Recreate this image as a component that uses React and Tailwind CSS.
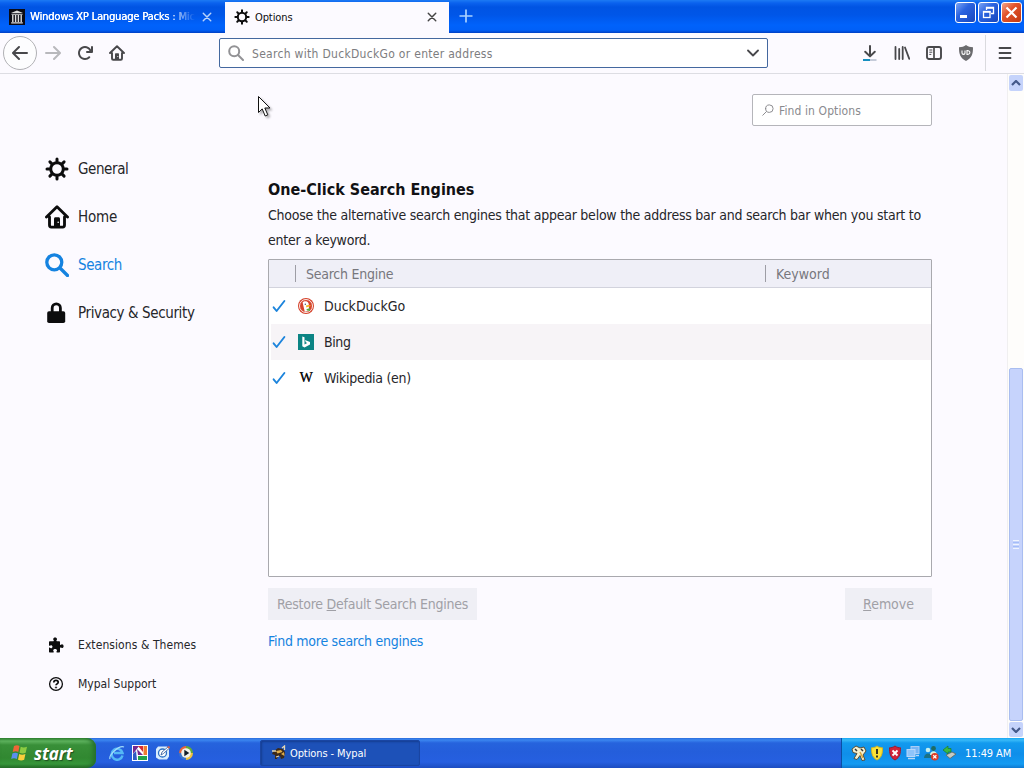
import React from 'react';

const Gear = ({ className }) => (
  <svg viewBox="0 0 24 24" className={className} fill="none" stroke="currentColor">
    <circle cx="12" cy="12" r="6.3" strokeWidth="3" />
    <path
      strokeWidth="3"
      strokeLinecap="round"
      d="M12 2v3M12 19v3M2 12h3M19 12h3M4.9 4.9l2 2M17.1 17.1l2 2M4.9 19.1l2-2M17.1 6.9l2-2"
    />
  </svg>
);

const House = ({ className }) => (
  <svg viewBox="0 0 16 16" className={className}>
    <path
      d="M1 8l7-6.8L15 8M3 8v5.4c0 .8.4 1.3 1.2 1.3h7.6c.8 0 1.2-.5 1.2-1.3V8"
      fill="none"
      stroke="currentColor"
      strokeWidth="1.9"
      strokeLinecap="round"
      strokeLinejoin="round"
    />
    <path d="M6 15V9.2c0-.6.4-1 1-1h2c.6 0 1 .4 1 1V15z" fill="currentColor" />
    <circle cx="8.8" cy="11.5" r=".55" fill="#fff" />
  </svg>
);

const Magnifier = ({ className, width = 2 }) => (
  <svg viewBox="0 0 16 16" className={className} fill="none" stroke="currentColor" strokeWidth={width} strokeLinecap="round">
    <circle cx="6.2" cy="6.2" r="5" />
    <path d="M10 10l5 5" />
  </svg>
);

const Lock = () => (
  <svg viewBox="0 0 24 24" className="h-6 w-6">
    <path d="M7.2 12V7a4.1 4.1 0 0 1 8.2 0V12" fill="none" stroke="currentColor" strokeWidth="2.8" />
    <rect x="2.200" y="10.2" width="18" height="11.800" rx="1.8" fill="currentColor" />
  </svg>
);

const Puzzle = () => (
  <svg viewBox="0 0 16 16" className="h-4 w-4" fill="currentColor">
    <path d="M1 5.2c0-.6.4-1 1-1h3.400c.5 0 .5-.5.300-.9C5.400 2.800 5.200 2.500 5.200 2.200c0-1 .8-1.700 1.900-1.700S9 1.200 9 2.200c0 .4-.2.700-.5 1.100-.2.400-.1.900.4.900H11c.6 0 1 .4 1 1v2.300c0 .5.5.6.900.3.300-.3.700-.5 1.100-.5.900 0 1.600.9 1.600 1.900s-.7 1.900-1.600 1.900c-.4 0-.8-.2-1.100-.5-.4-.3-.9-.1-.9.400V14.500c0 .6-.4 1-1 1H8.900c-.5 0-.6-.5-.4-.9.300-.4.500-.7.500-1.100 0-.8-.8-1.400-1.900-1.400s-1.900.6-1.900 1.400c0 .4.200.7.500 1.100.2.400.2.900-.3.900H2c-.6 0-1-.4-1-1v-3.400c0-.5.500-.6.900-.4.400.300.6.500 1.100.500.800 0 1.500-.6 1.500-1.500S3.800 8.200 3 8.200c-.5 0-.7.200-1.100.500-.4.200-.9.100-.9-.4z" />
  </svg>
);

const Help = () => (
  <svg viewBox="0 0 16 16" className="h-4 w-4" fill="none" stroke="currentColor">
    <circle cx="8" cy="8" r="6.4" strokeWidth="1.3" />
    <path d="M5.800 6.500c0-1.300.9-2.100 2.200-2.100s2.200.8 2.200 1.900c0 1.500-2.200 1.600-2.200 3" strokeWidth="1.700" />
    <circle cx="8" cy="11.500" r=".7" fill="currentColor" strokeWidth=".6" />
  </svg>
);

const Check = () => (
  <svg viewBox="0 0 14 14" className="h-3.5 w-3.5" fill="none" stroke="#1c84dc" strokeWidth="1.9" strokeLinecap="round" strokeLinejoin="round">
    <path d="M1.600 8.300l3 3.700L12.400 2" />
  </svg>
);

const Arrow = ({ className }) => (
  <svg viewBox="0 0 16 16" className={className} fill="currentColor">
    <path d="M15 7H3.414l4.293-4.293a1 1 0 0 0-1.414-1.414l-6 6a1 1 0 0 0 0 1.414l6 6a1 1 0 0 0 1.414-1.414L3.414 9H15a1 1 0 0 0 0-2z" />
  </svg>
);

const Close = ({ className }) => (
  <svg viewBox="0 0 12 12" className={className} fill="none" stroke="currentColor" strokeWidth="1.700" strokeLinecap="round">
    <path d="M1.500 1.500l9 9M10.500 1.500l-9 9" />
  </svg>
);

const TitleBar = () => (
  <div className="flex h-[33px] bg-[linear-gradient(180deg,#1c7af4_0,#0a62ee_3px,#0054e3_7px,#0056e8_15px,#0062fb_25px,#0060f8_30px,#003fc4_33px)]">
    <div className="flex w-[225px] items-center pl-[9px] text-white">
      <svg viewBox="0 0 16 16" className="h-4 w-4 shrink-0">
        <rect width="16" height="16" fill="#0b0b14" />
        <path d="M8 1.500l6 2.500H2zM2.500 4.800h11v1h-11zM2.200 13.200h11.600v1.300H2.200z" fill="#ddd" />
        <path d="M3.800 6v7M6.600 6v7M9.400 6v7M12.200 6v7" stroke="#ddd" strokeWidth="1.400" />
      </svg>
      <div className="ml-[5px] w-[165px] whitespace-nowrap pt-[2px] font-['DejaVu_Sans_Condensed','DejaVu_Sans',sans-serif] text-[11px] tracking-[-0.15px] [mask-image:linear-gradient(90deg,#000_83%,transparent)] [text-shadow:0.3px_0_0_#fff]">
        Windows XP Language Packs : Mic
      </div>
      <Close className="ml-[7px] h-2.5 w-2.5 text-[#b9d4fb]" />
    </div>
    <div className="mt-[2px] flex w-[224px] items-center bg-[#fcfaff] pb-[1px] pl-[9px] text-[#0c0c0d]">
      <Gear className="h-4 w-4" />
      <span className="ml-[5px] pt-[2px] text-[11px] tracking-[-0.1px]">Options</span>
      <Close className="ml-auto mr-[12px] h-2.5 w-2.5 text-[#444]" />
    </div>
    <svg viewBox="0 0 14 14" className="ml-[10px] mt-[9px] h-3.5 w-3.5" stroke="#a9d2ff" strokeWidth="1.700">
      <path d="M7 .5v13M.5 7h13" />
    </svg>
    <div className="ml-auto mr-[2px] mt-[2px] flex gap-[2px]">
      <div className="h-[21px] w-[21px] rounded-[3px] border border-white bg-[linear-gradient(135deg,#7ba4f5,#2a63e0_40%,#1747bd)]">
        <svg viewBox="0 0 19 19"><path d="M4 12h7v3H4z" fill="#fff" /></svg>
      </div>
      <div className="h-[21px] w-[21px] rounded-[3px] border border-white bg-[linear-gradient(135deg,#7ba4f5,#2a63e0_40%,#1747bd)]">
        <svg viewBox="0 0 19 19" fill="none" stroke="#fff">
          <path d="M7.500 7V4.500h7v6H12" strokeWidth="1.300" />
          <path d="M7 5h8" strokeWidth="1.500" />
          <rect x="4.500" y="8.500" width="6.500" height="6" strokeWidth="1.300" />
          <path d="M4 9h7.500" strokeWidth="1.500" />
        </svg>
      </div>
      <div className="h-[21px] w-[21px] rounded-[3px] border border-white bg-[linear-gradient(135deg,#f0a58c,#e2532b_40%,#c23a12)]">
        <svg viewBox="0 0 19 19" stroke="#fff" strokeWidth="2.200"><path d="M4.500 4.500l10 10M14.500 4.500l-10 10" /></svg>
      </div>
    </div>
  </div>
);

const Toolbar = () => (
  <div className="flex h-[41px] items-center border-b border-[#dddde3] bg-[#fcfaff] text-[#48484b]">
    <div className="ml-[3px] flex h-[34px] w-[34px] shrink-0 items-center justify-center rounded-full border border-[#b1b1b5] bg-[#fdfdfe]">
      <Arrow className="h-4 w-4" />
    </div>
    <Arrow className="ml-[8px] h-4 w-4 shrink-0 -scale-x-100 text-[#b8b8bc]" />
    <svg viewBox="0 0 16 16" className="ml-[16px] h-4 w-4 shrink-0" fill="currentColor">
      <path d="M15 1a1 1 0 0 0-1 1v2.418A6.995 6.995 0 1 0 8 15a6.954 6.954 0 0 0 4.950-2.050 1 1 0 0 0-1.414-1.414A5.019 5.019 0 1 1 12.549 6H10a1 1 0 0 0 0 2h5a1 1 0 0 0 1-1V2a1 1 0 0 0-1-1z" />
    </svg>
    <House className="ml-[16px] h-4 w-4 shrink-0" />
    <div className="ml-[94px] flex h-[30px] w-[549px] shrink-0 items-center rounded-[2px] border border-[#44689f] bg-white pl-[8px]">
      <Magnifier className="h-4 w-4 text-[#929295]" />
      <span className="ml-[8px] pt-px text-[12px] tracking-[0.3px] text-[#7d7d80]">Search with DuckDuckGo or enter address</span>
      <svg viewBox="0 0 12 8" className="ml-auto mr-[8px] h-2 w-3" fill="none" stroke="currentColor" strokeWidth="1.800" strokeLinecap="round" strokeLinejoin="round">
        <path d="M1 1.500l5 5 5-5" />
      </svg>
    </div>
    <svg viewBox="0 0 16 16" className="ml-[94px] h-4 w-4 shrink-0" fill="none">
      <path d="M8 1v10M3.200 6.700L8 11.400l4.800-4.700" stroke="currentColor" strokeWidth="2" strokeLinecap="round" strokeLinejoin="round" />
      <path d="M1 15h7" stroke="#168fc0" strokeWidth="2" />
      <path d="M8 15h6.500" stroke="#c5cbd9" strokeWidth="2" />
    </svg>
    <svg viewBox="0 0 16 16" className="ml-[16px] h-4 w-4 shrink-0" stroke="currentColor" strokeWidth="1.800" strokeLinecap="round">
      <path d="M1.500 2v12M5.200 4v10M8.700 2v12M11 2.500l4.200 11.300" />
    </svg>
    <svg viewBox="0 0 16 16" className="ml-[16px] h-4 w-4 shrink-0" fill="none" stroke="currentColor">
      <rect x="1" y="2" width="14" height="12" rx="2" strokeWidth="1.900" />
      <path d="M8 2v12" strokeWidth="1.700" />
      <path d="M3.300 5h3M3.300 7.200h3M3.300 9.400h2" strokeWidth="1" />
    </svg>
    <svg viewBox="0 0 16 16" className="ml-[16px] h-4 w-4 shrink-0">
      <path d="M8 0c2 1.500 4 2.200 7 2.200 0 7-1 10.500-7 13.800C2 12.700 1 9.200 1 2.200 4 2.200 6 1.500 8 0z" fill="#6b6b6e" />
      <path d="M4 5.500v2.500c0 1.800 3 1.800 3 0V5.500M9 5.500v4c3.800.2 3.800-4.200 0-4z" fill="none" stroke="#fff" strokeWidth="1.100" />
    </svg>
    <div className="ml-[11px] h-[36px] w-px bg-[#dadade]" />
    <svg viewBox="0 0 16 16" className="ml-[11px] h-4 w-4 shrink-0" stroke="currentColor" strokeWidth="1.800" strokeLinecap="round">
      <path d="M2.500 3h11M2.500 8h11M2.500 13h11" />
    </svg>
  </div>
);

const categories = [
  { label: 'General', icon: <Gear className="h-6 w-6" />, tracking: 'tracking-[-0.4px]' },
  { label: 'Home', icon: <House className="h-6 w-6" />, tracking: 'tracking-[-0.2px]' },
  { label: 'Search', icon: <Magnifier className="h-6 w-6" width={2.2} />, tracking: 'tracking-[-0.4px]', active: true },
  { label: 'Privacy & Security', icon: <Lock />, tracking: 'tracking-[-0.38px]' },
];

const Sidebar = () => (
  <div className="flex w-[268px] flex-col pb-[35px] pl-[45px] pt-[71px]">
    {categories.map((c) => (
      <div key={c.label} className={`flex h-[48px] items-center gap-[9px] ${c.active ? 'text-[#1583e0]' : 'text-[#0c0c0d]'}`}>
        {c.icon}
        <span className={`text-[15px] ${c.tracking} ${c.active ? '' : 'text-[#26262a]'}`}>{c.label}</span>
      </div>
    ))}
    <div className="mt-auto flex h-[39px] items-center gap-[14px] pl-[3px] text-[#0c0c0d]">
      <Puzzle />
      <span className="text-[12px] tracking-[0.08px] text-[#26262a]">Extensions &amp; Themes</span>
    </div>
    <div className="flex h-[39px] items-center gap-[14px] pl-[3px] text-[#0c0c0d]">
      <Help />
      <span className="text-[12px] text-[#26262a]">Mypal Support</span>
    </div>
  </div>
);

const DuckIcon = () => (
  <svg viewBox="0 0 16 16" className="h-4 w-4">
    <circle cx="8" cy="8" r="8" fill="#d5432c" />
    <circle cx="8" cy="8" r="6.500" fill="none" stroke="#fff" strokeWidth=".9" />
    <path d="M4.600 4.600C5.800 2.600 9.500 2.800 10.500 5.200c.5 1.300.3 2.500.3 3.800l.7 3.800-4.700 1z" fill="#fff" />
    <path d="M8 7.600c1.300-.9 3.600-.9 5 0-.8 1.100-3 1.200-4.700 1.800z" fill="#f6b71d" />
    <path d="M8.400 11.300l3.600-1.400v3.200l-3-.7z" fill="#59a83e" />
    <circle cx="7.300" cy="6.200" r=".7" fill="#3b4a68" />
  </svg>
);

const BingIcon = () => (
  <svg viewBox="0 0 16 16" className="h-4 w-4">
    <rect width="16" height="16" fill="#0c8484" />
    <path d="M4.300 2.400l2.200.8v7.200l2.700-1.500-1.400-.7-.8-2.100 5 1.900v2.400l-5.500 3.200-2.200-1.300z" fill="#fff" />
  </svg>
);

const WikipediaIcon = () => (
  <span className="flex h-4 w-4 items-center justify-center font-['Liberation_Serif',serif] text-[14px] leading-none text-[#111] [text-shadow:0.3px_0_0_#111]">W</span>
);

const engines = [
  { name: 'DuckDuckGo', icon: <DuckIcon />, tracking: 'tracking-[0px]' },
  { name: 'Bing', icon: <BingIcon />, tracking: 'tracking-[-0.4px]' },
  { name: 'Wikipedia (en)', icon: <WikipediaIcon />, tracking: 'tracking-[-0.3px]' },
];

const EngineTable = () => (
  <div className="mt-[6px] h-[318px] rounded-[1px] border border-[#a9a9ae] bg-white text-[14px]">
    <div className="flex h-[28px] items-center border-b border-[#d2d3dd] bg-[#efeff7] text-[#77777d]">
      <div className="ml-[26px] h-[17px] w-px bg-[#9d9da5]" />
      <span className="ml-[10px] pt-px tracking-[-0.25px]">Search Engine</span>
      <div className="ml-auto flex w-[166px] items-center">
        <div className="h-[17px] w-px bg-[#9d9da5]" />
        <span className="ml-[10px] pt-px tracking-[0px]">Keyword</span>
      </div>
    </div>
    {engines.map((engine, i) => (
      <div key={engine.name} className={`ml-[2px] flex h-[36px] items-center pl-px text-[#26262a] ${i % 2 ? 'bg-[#f7f4f7]' : ''}`}>
        <Check />
        <span className="ml-[12px]">{engine.icon}</span>
        <span className={`ml-[10px] ${engine.tracking}`}>{engine.name}</span>
      </div>
    ))}
  </div>
);

const Scrollbar = () => (
  <div className="ml-auto flex w-[17px] flex-col border-l border-[#f0eff0] bg-[#fefdfb] pl-px">
    <div className="mt-[1px] flex h-[16px] w-[14px] items-center justify-center rounded-[2px] bg-[#c5d3fb]">
      <svg viewBox="0 0 10 6" className="h-1.5 w-2.5" fill="none" stroke="#44598a" strokeWidth="2.200"><path d="M1 5l4-4 4 4" /></svg>
    </div>
    <div className="mt-[277px] flex h-[353px] w-[14px] flex-col items-center justify-center gap-px rounded-[2px] border border-[#a9bdf0] bg-[#c6d3fc]">
      <div className="h-px w-[6px] bg-[#eef4fe]" />
      <div className="h-px w-[6px] bg-[#a3bdf8]" />
      <div className="h-px w-[6px] bg-[#eef4fe]" />
      <div className="h-px w-[6px] bg-[#a3bdf8]" />
      <div className="h-px w-[6px] bg-[#eef4fe]" />
    </div>
    <div className="mt-[1px] flex h-[15px] w-[14px] items-center justify-center rounded-[2px] bg-[#c5d3fb]">
      <svg viewBox="0 0 10 6" className="h-1.5 w-2.5" fill="none" stroke="#44598a" strokeWidth="2.200"><path d="M1 1l4 4 4-4" /></svg>
    </div>
  </div>
);

const QuickLaunch = () => (
  <div className="ml-[13px] flex gap-[7px]">
    <svg viewBox="0 0 16 16" className="h-4 w-4" fill="none">
      <path d="M13.500 10.500A5.500 5.500 0 1 1 13.500 8H5" stroke="#55b9f5" strokeWidth="2.500" />
      <path d="M1 14C-.5 10 10 0 15 2" stroke="#a2ddfb" strokeWidth="1.200" />
    </svg>
    <svg viewBox="0 0 16 16" className="h-4 w-4">
      <rect width="16" height="16" fill="#fff" />
      <path d="M1 1h6L1 9z" fill="#742a91" />
      <path d="M6 1h5v6z" fill="#d82c35" />
      <path d="M11.500 1H15v9h-3.500z" fill="#ee7b31" />
      <path d="M6 11h9v4H6z" fill="#22a34a" />
      <path d="M1 15V9l3-3 1 9z" fill="#2f5bc4" />
      <path d="M5 4l6 6H6z" fill="#742a91" />
    </svg>
    <svg viewBox="0 0 16 16" className="h-4 w-4">
      <path d="M3 1.500h9l2 2v8l-2 3H4l-3-2V4z" fill="#d9edfd" />
      <circle cx="7.500" cy="8" r="4" fill="#fff" stroke="#2b71c6" strokeWidth="1.300" />
      <path d="M6 10l1-3 6-5 1.500 1-6 5.500z" fill="#fff" stroke="#2f5795" strokeWidth=".8" />
      <path d="M12 2l2-1 1 1.500-1 1z" fill="#e26445" />
    </svg>
    <svg viewBox="0 0 16 16" className="h-4 w-4">
      <path d="M8 8V1a7 7 0 0 0-7 7z" fill="#e8653a" />
      <path d="M8 8V1a7 7 0 0 1 7 7z" fill="#65aa35" />
      <path d="M8 8h7a7 7 0 0 1-7 7z" fill="#f3c33b" />
      <path d="M8 8v7a7 7 0 0 1-7-7z" fill="#3b76cf" />
      <circle cx="8" cy="8" r="4.800" fill="#f4f4ec" />
      <path d="M6.300 4.800l5 3.200-5 3.200z" fill="#15202b" />
    </svg>
  </div>
);

const Tray = () => (
  <div className="ml-auto flex h-full w-[183px] items-center border-l border-[#0a4fa5] bg-[linear-gradient(180deg,#16a5f2_0,#39baf8_2px,#129aee_5px,#0f8eea_16px,#139bf2_26px,#0e78d0_30px)] pl-[9px] text-white">
    <div className="flex gap-[2px]">
      <svg viewBox="0 0 16 16" className="h-4 w-4">
        <path d="M1 4l4-3 4 2 4-1 2 4-3 4 2 5-3 .5-2-5-3 4-3-1 3-5-4-1z" fill="#f4efcf" stroke="#554426" strokeWidth=".9" />
        <path d="M4 4l2 2M10 4l2 2" stroke="#333" strokeWidth="1.500" />
        <path d="M9 7l3 6" stroke="#d9a43a" strokeWidth="1.500" />
      </svg>
      <svg viewBox="0 0 16 16" className="h-4 w-4">
        <path d="M8 1c2 1.500 4 1.800 5.500 1.800 0 5.500-.5 9.500-5.500 12.200C3 12.300 2.500 8.300 2.500 2.800 4 2.800 6 2.500 8 1z" fill="#fbe236" stroke="#d8b51d" />
        <path d="M8 4v5M8 10.500v2" stroke="#222" strokeWidth="1.800" />
      </svg>
      <svg viewBox="0 0 16 16" className="h-4 w-4">
        <path d="M8 1c2 1.500 4 1.800 5.500 1.800 0 5.500-.5 9.500-5.500 12.200C3 12.300 2.500 8.300 2.500 2.800 4 2.800 6 2.500 8 1z" fill="#d3233a" stroke="#9b1c30" />
        <path d="M5.500 5.500l5 5M10.500 5.500l-5 5" stroke="#fff" strokeWidth="1.800" />
      </svg>
      <svg viewBox="0 0 16 16" className="h-4 w-4">
        <rect x="6" y="1.500" width="8" height="7" fill="#76b5f6" stroke="#a9cdf6" />
        <rect x="2" y="4.500" width="8" height="7" fill="#8fc4fa" stroke="#b9d8fa" />
        <path d="M3 13.500h7M11 10.500h3" stroke="#bcd8f5" strokeWidth="1.500" />
      </svg>
      <svg viewBox="0 0 16 16" className="h-4 w-4">
        <circle cx="5" cy="5" r="2.300" fill="#c5f0ee" />
        <path d="M1 13c0-6 8-6 8 0z" fill="#1a7184" />
        <circle cx="10.500" cy="3.500" r="2.400" fill="#1f6b62" />
        <path d="M7 10c0-5 7-5 7 0z" fill="#d5f3df" />
        <circle cx="11.800" cy="11.800" r="3.800" fill="#dc3a25" />
        <path d="M10.200 10.200l3.200 3.200M13.400 10.200l-3.200 3.200" stroke="#fff" strokeWidth="1.300" />
      </svg>
      <svg viewBox="0 0 16 16" className="h-4 w-4">
        <path d="M5 10l6-3 4 2-6 4.500z" fill="#c7cbc5" stroke="#5d665f" strokeWidth=".8" />
        <path d="M2 5l5-4v2.500h3v3.500H7V9z" fill="#3ab843" stroke="#1b7d2b" strokeWidth=".7" />
      </svg>
    </div>
    <span className="ml-[8px] whitespace-nowrap pt-[2px] text-[11px] tracking-[-0.1px]">11:49 AM</span>
  </div>
);

const Taskbar = () => (
  <div className="flex h-[30px] items-center bg-[linear-gradient(180deg,#2a6cdd_0,#3b86f0_2px,#2663dd_5px,#245edb_14px,#265fe0_24px,#1c4cc0_30px)]">
    <div className="flex h-full w-[96px] items-center rounded-r-[9px] bg-[linear-gradient(180deg,#348c34_0,#60b560_3px,#388f38_7px,#318831_20px,#36963a_26px,#226a25_30px)] pl-[11px] shadow-[inset_-3px_0_4px_#266f2b]">
      <svg viewBox="0 0 18 18" className="h-[18px] w-[18px]">
        <path d="M3 2c2-1 4-1 5.500 0L7.300 8C5.500 7 4 7 1.700 8z" fill="#ef6637" />
        <path d="M9.700 2.700c2 1 4 1 6.300 0l-1.300 6c-2 1-4 1-6.200 0z" fill="#8ccb42" />
        <path d="M1.400 9.500c2-1 4-1 5.600 0L5.800 15c-2-1-3.700-1-5.600 0z" fill="#5a8fee" />
        <path d="M8.200 10c2 1 4 1 6.200 0l-1.200 5.800c-2 1-4 1-6.200 0z" fill="#f9cf3c" />
      </svg>
      <span className="ml-[5px] font-['Open_Sans',sans-serif] text-[17px] font-bold italic leading-none tracking-[-0.1px] text-white [text-shadow:1px_1px_1px_#1d4f20]">start</span>
    </div>
    <QuickLaunch />
    <div className="ml-[66px] flex h-[26px] w-[160px] items-center rounded-[2px] border border-[#1945a2] bg-[#1d51b8] pl-[10px] text-white shadow-[inset_1px_1px_2px_#153d91]">
      <svg viewBox="0 0 16 16" className="h-4 w-4">
        <path d="M3 6l4-3 5 1 2 3-1 6-3 1-1-3H7l-1 3H4l0-4-3-1 1-2z" fill="#3c291a" />
        <path d="M5 6l5-1 1.500 2-5 1.500zM10 9l3-2 .5 4z" fill="#e0ad49" />
        <path d="M1 6h4M5 12l3-1M11 3l2.500-2v4" stroke="#e4d7b3" strokeWidth="1.300" fill="none" />
      </svg>
      <span className="ml-[3px] pt-[2px] text-[11px] tracking-[-0.1px]">Options - Mypal</span>
    </div>
    <Tray />
  </div>
);

const App = () => (
  <div className="relative flex h-[768px] w-[1024px] flex-col overflow-hidden bg-[#fcfaff] font-['DejaVu_Sans_Condensed','DejaVu_Sans',sans-serif]">
    <TitleBar />
    <Toolbar />
    <div className="flex h-[664px]">
      <Sidebar />
      <div className="flex w-[664px] flex-col pt-[20px] text-[14px] text-[#26262a]">
        <div className="flex h-[32px] w-[180px] items-center self-end rounded-[2px] border border-[#b5b5ba] bg-white pl-[9px] text-[#8a8a8e]">
          <Magnifier className="h-3 w-3 -scale-x-100" width={1.3} />
          <span className="ml-[5px] pt-px text-[12px] tracking-[0.1px]">Find in Options</span>
        </div>
        <h2 className="mt-[52px] text-[16px] font-bold leading-[24px] text-[#111114]">One-Click Search Engines</h2>
        <p className="mt-[1px] whitespace-nowrap leading-[25px] tracking-[-0.245px]">
          Choose the alternative search engines that appear below the address bar and search bar when you start to
          <br />
          enter a keyword.
        </p>
        <EngineTable />
        <div className="mt-[11px] flex justify-between text-[#a0a0a6]">
          <button className="h-[32px] w-[209px] whitespace-nowrap bg-[#efeff5] tracking-[-0.25px]">
            Restore <u>D</u>efault Search Engines
          </button>
          <button className="h-[32px] w-[87px] bg-[#efeff5] tracking-[-0.05px]">
            <u>R</u>emove
          </button>
        </div>
        <a className="mt-[9px] leading-[24px] tracking-[-0.27px] text-[#1583e0]">Find more search engines</a>
      </div>
      <Scrollbar />
    </div>
    <Taskbar />
    <svg viewBox="0 0 14 22" className="absolute left-[258px] top-[96px] h-[22px] w-[14px] drop-shadow-[2px_2px_1px_rgba(0,0,0,0.3)]">
      <path d="M.5.500v16l3.700-3.600 3 7.100 2.600-1.200-3-6.800h5.200z" fill="#fff" stroke="#111" />
    </svg>
  </div>
);

export default App;
